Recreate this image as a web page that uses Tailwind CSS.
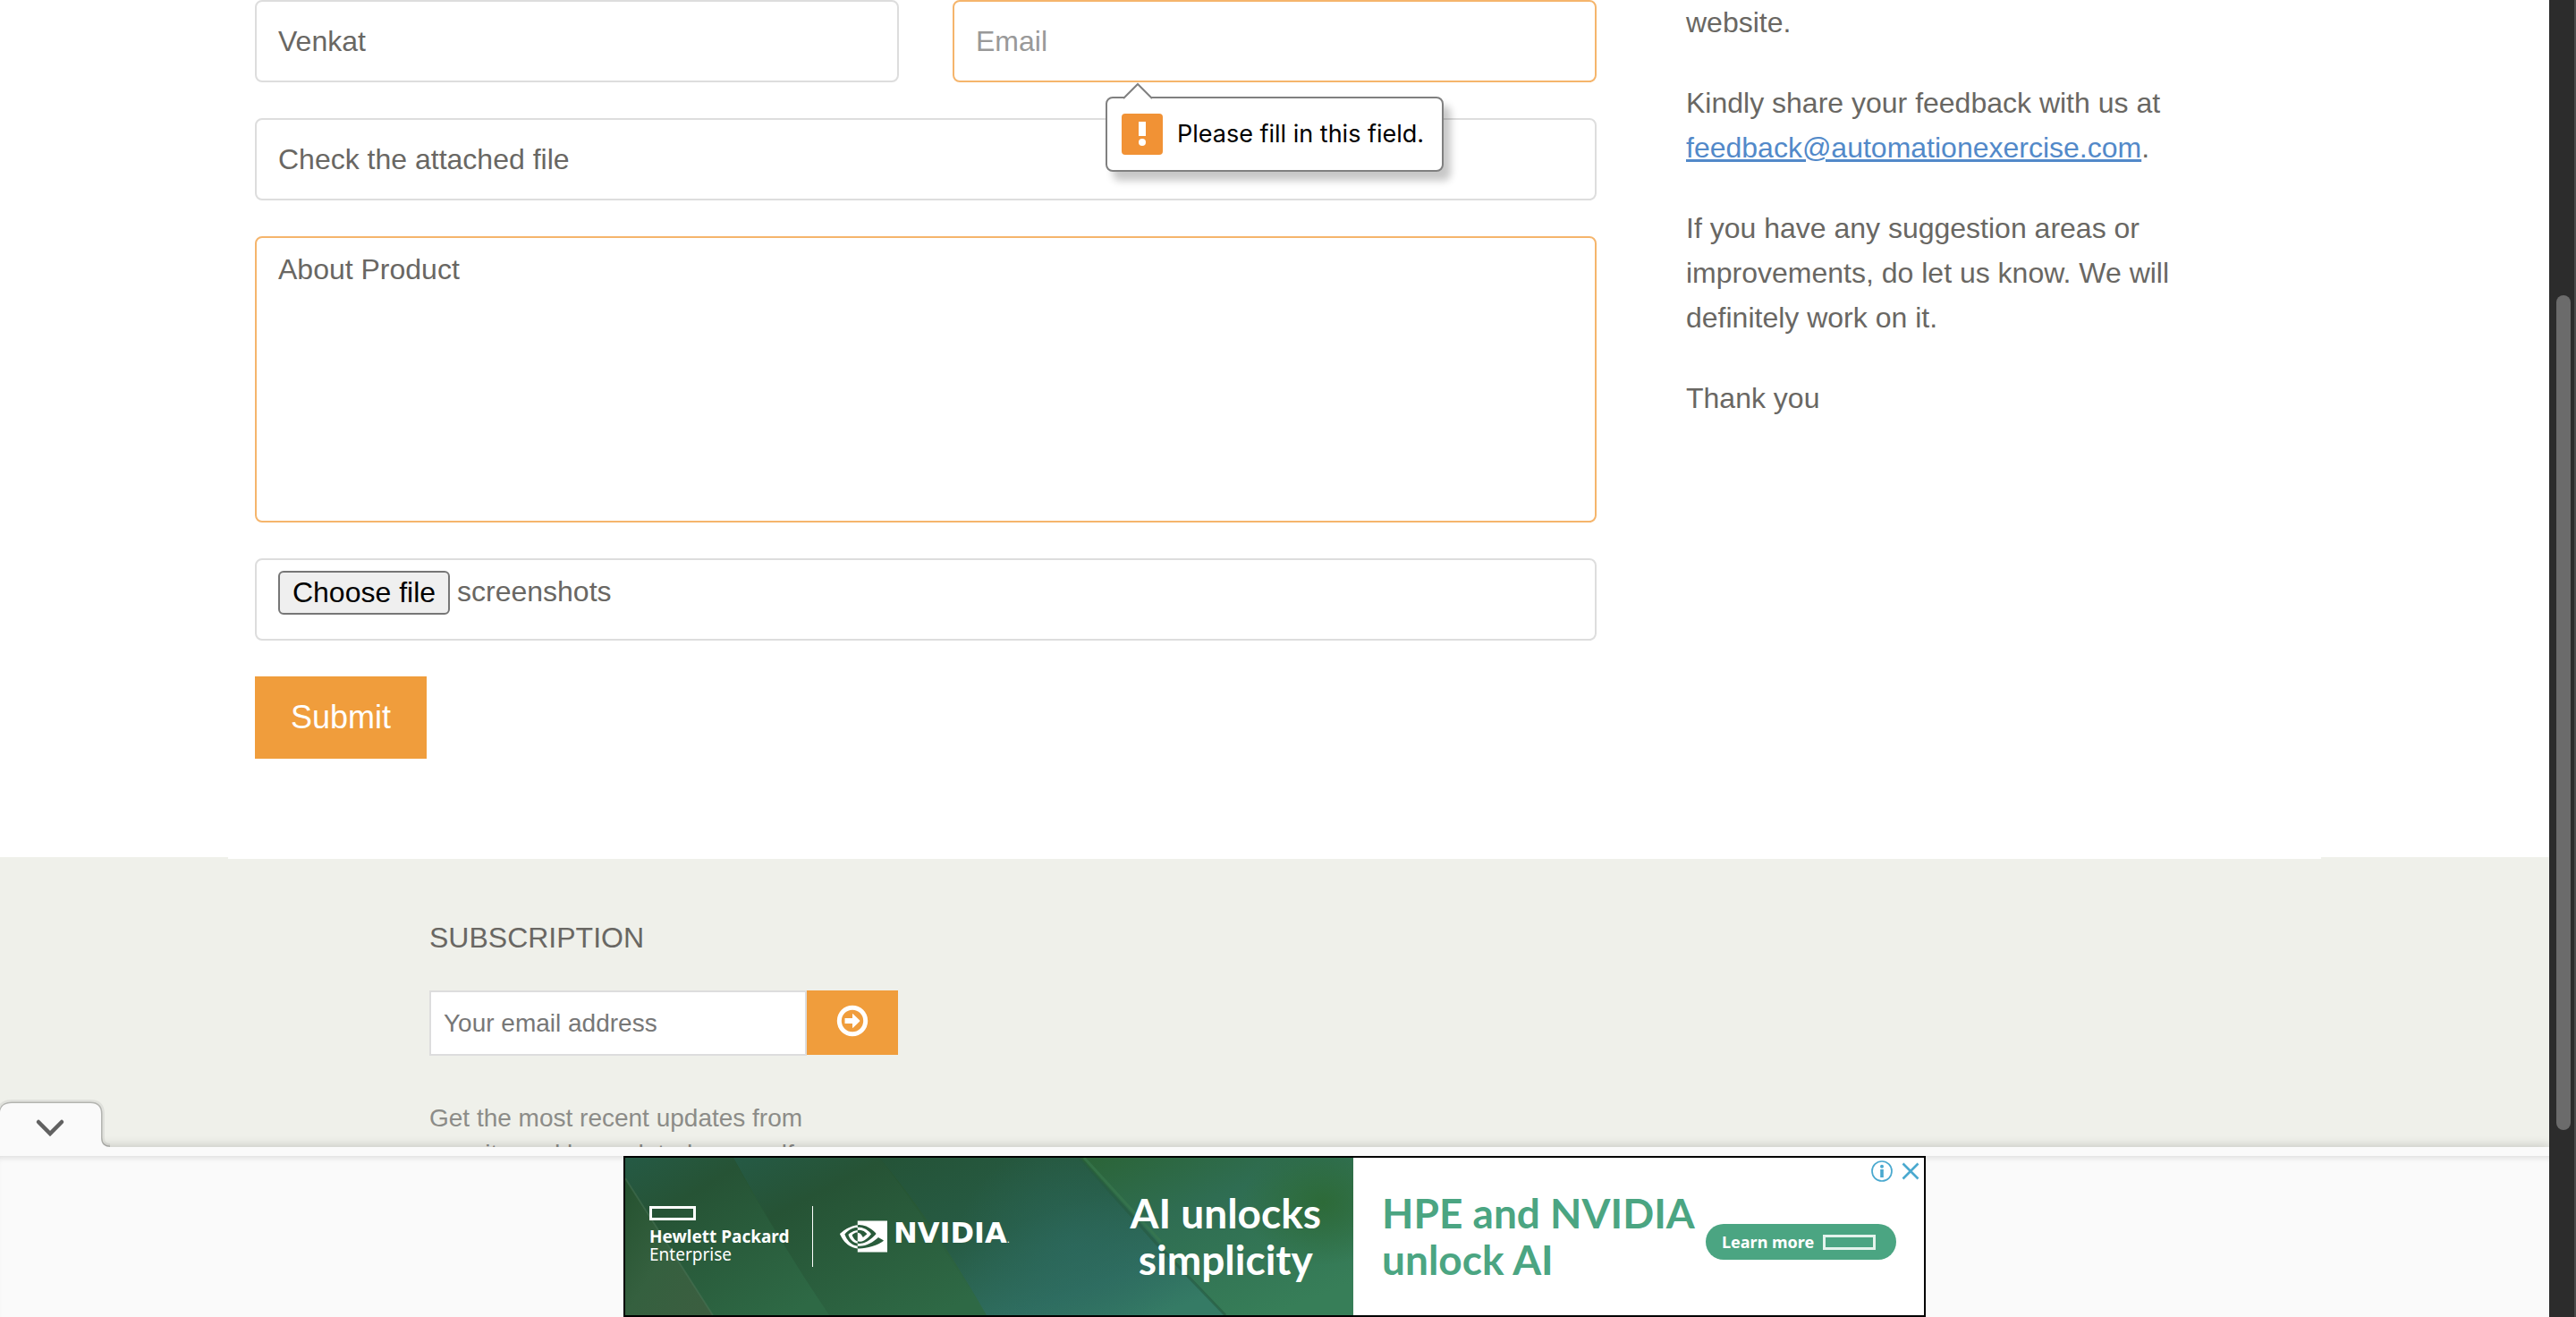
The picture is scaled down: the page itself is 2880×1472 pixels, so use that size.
<!DOCTYPE html>
<html lang="en">
<head>
<meta charset="utf-8">
<title>Contact us</title>
<script src="https://cdn.jsdelivr.net/npm/@tailwindcss/browser@4"></script>
</head>
<body class="flex h-screen overflow-hidden bg-white font-['Liberation_Sans',Arial,sans-serif] text-[32px] text-[#696763]">

<div class="flex h-full min-w-0 flex-1 flex-col">
  <div class="min-h-0 flex-1 overflow-hidden bg-[#eff0ea]">

    <main class="bg-white">
      <div class="mx-auto grid max-w-[2340px] grid-cols-3">
        <form class="col-span-2 flex flex-col gap-10 px-[30px] pb-[110px]">
          <div class="grid grid-cols-2 gap-[60px]">
            <input type="text" aria-label="Name" value="Venkat" class="h-[92px] w-full rounded-lg border-2 border-[#dddddd] px-6">
            <div class="relative">
              <input type="email" aria-label="Email" placeholder="Email" class="h-[92px] w-full rounded-lg border-2 border-[#f5b56c] px-6 placeholder:text-[#999999]">
              <!-- Validation bubble -->
              <div role="alert" class="absolute top-[108px] left-[171px] z-10 flex h-[84px] w-[378px] items-center gap-4 rounded-lg border-2 border-[#808080] bg-white px-4 font-[Inter,sans-serif] text-[27px] text-black shadow-[8px_10px_8px_rgba(0,0,0,0.22)]">
                <svg class="absolute -top-[18px] left-4 h-5 w-9" viewBox="0 0 36 20"><path d="M2 18 L18 2 L34 18 V20 H2 Z" fill="#fff"/><path d="M2 18 L18 2 L34 18" fill="none" stroke="#808080" stroke-width="2"/></svg>
                <svg class="h-[46px] w-[46px] shrink-0" viewBox="0 0 46 46"><rect width="46" height="46" rx="4" fill="#f19235"/><path d="M19 9h8v16h-8z" fill="#fff"/><circle cx="23" cy="32" r="4" fill="#fff"/></svg>
                <span class="whitespace-nowrap">Please fill in this field.</span>
              </div>
            </div>
          </div>
          <input type="text" aria-label="Subject" value="Check the attached file" class="h-[92px] w-full rounded-lg border-2 border-[#dddddd] px-6">
          <textarea aria-label="Message" class="block h-80 w-full resize-none rounded-lg border-2 border-[#f5b56c] px-6 py-3 leading-[46px]">About Product</textarea>
          <label class="relative flex h-[92px] w-full items-start gap-2 rounded-lg border-2 border-[#dddddd] px-6 py-3">
            <input type="file" class="sr-only">
            <span class="h-[49px] w-48 rounded-md border-2 border-[#767676] bg-[#efefef] text-center leading-[44px] text-black">Choose file</span>
            <span class="leading-[46px]">screenshots</span>
          </label>
          <button type="submit" class="h-[92px] w-48 bg-[#f09d3c] text-4xl text-white">Submit</button>
        </form>

        <aside class="flex max-w-[710px] flex-col gap-10 pr-[50px] pl-[70px] leading-[50px]">
          <p>website.</p>
          <p>Kindly share your feedback with us at <a href="mailto:feedback@automationexercise.com" class="text-[#5289c9] underline decoration-[3px] underline-offset-2">feedback@automationexercise.com</a>.</p>
          <p>If you have any suggestion areas or improvements, do let us know. We will definitely work on it.</p>
          <p>Thank you</p>
        </aside>
      </div>
    </main>

    <footer class="bg-[#eff0ea]">
      <div class="mx-auto max-w-[2340px] border-t-2 border-white pt-[65px] pl-[225px]">
        <h2 class="leading-[46px]">SUBSCRIPTION</h2>
        <form class="mt-9 flex">
          <input type="email" aria-label="Your email address" placeholder="Your email address" class="h-[73px] w-[422px] border-2 border-[#dddddd] bg-white px-[14px] text-[28px] placeholder:text-[#777777]">
          <button type="submit" aria-label="Subscribe" class="flex h-[72px] w-[102px] items-center justify-center bg-[#f09d3c]">
            <svg class="mb-1 h-9 w-9" viewBox="0 0 36 36"><circle cx="18" cy="18" r="14.7" fill="none" stroke="#fff" stroke-width="5"/><path d="M9.5 15h8.500v-4.200q0-1.200 1-.4l7 6.900q.8.700 0 1.400l-7 6.900q-1 .8-1-.4V21H9.500z" fill="#fff"/></svg>
          </button>
        </form>
        <p class="mt-[50px] max-w-[524px] text-[28px] leading-10 text-[#8c8c88]">Get the most recent updates from<br>our site and be updated your self...</p>
      </div>
    </footer>
  </div>

  <!-- Anchored ad -->
  <section aria-label="Advertisement" class="relative bg-[#fafafa] pt-[10px] shadow-[0_-2px_10px_rgba(0,0,0,0.16)]">
    <button type="button" aria-label="Hide ad" class="absolute -top-[50px] left-0 h-[60px] w-[124px]">
      <svg class="h-[60px] w-[124px] overflow-visible" viewBox="0 0 124 60">
        <path d="M0 13Q1 1 13 1H101Q113 1 113 13V40Q113 50 123 50" fill="none" stroke="#000" stroke-opacity=".06" stroke-width="8"/>
        <path d="M0 13Q1 1 13 1H101Q113 1 113 13V40Q113 50 123 50" fill="none" stroke="#000" stroke-opacity=".2" stroke-width="3"/>
        <path d="M0 11Q1 1 13 1H101Q113 1 113 13V40Q113 50 124 50V60H0Z" fill="#fafafa"/>
        <path d="M43 22L56 35L69 22" fill="none" stroke="#616161" stroke-width="4.500" stroke-linecap="round"/>
      </svg>
    </button>
    <div class="flex justify-center shadow-[inset_0_6px_6px_-4px_rgba(0,0,0,0.12)]">
      <div class="flex h-[180px] w-[1456px] border-2 border-black bg-white">
        <div class="relative flex w-[814px] items-center overflow-hidden text-white">
          <svg class="absolute inset-0 h-full w-full" viewBox="0 0 814 176" preserveAspectRatio="none">
            <defs>
              <linearGradient id="base" x1="0" y1="0" x2="0" y2="1"><stop offset="0" stop-color="#24502f"/><stop offset="1" stop-color="#2f6b47"/></linearGradient>
              <linearGradient id="left" x1="0" y1="0" x2="1" y2="1"><stop offset="0" stop-color="#24512f"/><stop offset=".5" stop-color="#35603f"/><stop offset="1" stop-color="#3c5e40"/></linearGradient>
              <linearGradient id="leaf" x1="0" y1="0" x2=".8" y2="1"><stop offset="0" stop-color="#255a45"/><stop offset=".3" stop-color="#265335"/><stop offset="1" stop-color="#2e6945"/></linearGradient>
              <linearGradient id="teal" x1="0" y1="0" x2=".8" y2="1"><stop offset="0" stop-color="#245337"/><stop offset=".45" stop-color="#275c45"/><stop offset=".8" stop-color="#2f6e60"/><stop offset="1" stop-color="#357b65"/></linearGradient>
              <linearGradient id="right" x1="0" y1="0" x2=".7" y2="1"><stop offset="0" stop-color="#2b6437"/><stop offset=".4" stop-color="#2f6d52"/><stop offset="1" stop-color="#377e58"/></linearGradient>
              <radialGradient id="pool"><stop offset="0" stop-color="#2c6a62" stop-opacity=".55"/><stop offset="1" stop-color="#2c6a62" stop-opacity="0"/></radialGradient>
              <radialGradient id="moss"><stop offset="0" stop-color="#2d6a38"/><stop offset="1" stop-color="#2d6a38" stop-opacity="0"/></radialGradient>
            </defs>
            <rect width="814" height="176" fill="url(#base)"/>
            <path d="M0 0H121Q145 50 228 176H98L0 23Z" fill="url(#leaf)"/>
            <path d="M0 23L98 176H0Z" fill="url(#left)"/>
            <path d="M121 0H284Q320 44 404 176H228Q170 90 121 0Z" fill="url(#leaf)"/>
            <path d="M284 0H508L671 176H404Q340 65 284 0Z" fill="url(#teal)"/>
            <ellipse cx="500" cy="100" rx="130" ry="120" fill="url(#pool)"/>
            <path d="M508 0H814V176H671Z" fill="url(#right)"/>
            <ellipse cx="780" cy="50" rx="90" ry="70" fill="url(#moss)"/>
            <path d="M508 0L594 96L671 176" fill="none" stroke="#265a40" stroke-opacity=".6" stroke-width="3"/>
            <path d="M513 0L599 94" fill="none" stroke="#3b7a50" stroke-opacity=".6" stroke-width="3"/>
            <path d="M0 23L98 176" fill="none" stroke="#4a7455" stroke-opacity=".5" stroke-width="2"/>
          </svg>
          <div class="relative ml-[27px] flex w-[183px] flex-col border-r border-white pb-1">
            <svg class="h-4 w-[52px]" viewBox="0 0 52 16"><rect x="1.500" y="1.500" width="49" height="13" fill="none" stroke="#fff" stroke-width="3"/></svg>
            <div class="mt-2 font-['Noto_Sans',sans-serif] text-[19px] leading-5 whitespace-nowrap"><b>Hewlett Packard</b><br>Enterprise</div>
          </div>
          <div class="relative ml-[30px] flex items-center gap-[7px]">
            <svg class="h-9 w-[53px]" viewBox="0 4 24 16" fill="#fff"><path d="M8.948 8.798v-1.430a6.700 6.700 0 0 1 .424-.018c3.922-.124 6.493 3.374 6.493 3.374s-2.774 3.851-5.750 3.851c-.398 0-.787-.062-1.158-.185v-4.346c1.528.185 1.837.857 2.747 2.385l2.040-1.714s-1.492-1.952-4-1.952a6.016 6.016 0 0 0-.796.035m0-4.735v2.138l.424-.027c5.450-.185 9.010 4.470 9.010 4.470s-4.080 4.964-8.330 4.964c-.370 0-.733-.035-1.095-.097v1.325c.3.035.610.062.910.062 3.957 0 6.820-2.023 9.593-4.408.459.371 2.340 1.263 2.730 1.652-2.633 2.208-8.772 3.984-12.253 3.984-.335 0-.653-.018-.971-.053v1.864H24V4.063zm0 10.326v1.131c-3.657-.654-4.673-4.460-4.673-4.460s1.758-1.944 4.673-2.262v1.237H8.940c-1.528-.186-2.730 1.245-2.730 1.245s.680 2.412 2.739 3.110M2.456 10.900s2.164-3.197 6.500-3.533V6.201C4.153 6.590 0 10.653 0 10.653s2.350 6.802 8.948 7.420v-1.237c-4.840-.6-6.492-5.936-6.492-5.936z"/></svg>
            <span class="font-['DejaVu_Sans',sans-serif] text-[32px] leading-9 font-bold">NVIDIA<span class="text-[10px] font-normal">.</span></span>
          </div>
          <div class="absolute inset-y-0 right-9 flex items-center text-center font-[Lato,sans-serif] text-[46px] leading-[52px] font-bold">AI unlocks<br>simplicity</div>
        </div>
        <div class="relative flex flex-1 items-center">
          <div class="ml-8 font-[Lato,sans-serif] text-[46px] leading-[52px] font-bold whitespace-nowrap text-[#4ba582]">HPE and NVIDIA<br>unlock AI</div>
          <a href="#" class="absolute top-[74px] right-[31px] flex h-10 w-[213px] items-center gap-[10px] rounded-full bg-[#4ba582] pl-[18px] font-['Noto_Sans',sans-serif] text-[18px] font-bold text-white">Learn more
            <svg class="h-[17px] w-[59px]" viewBox="0 0 59 17"><rect x="1.500" y="1.500" width="56" height="14" fill="none" stroke="#e4f3ec" stroke-width="3"/></svg>
          </a>
          <div class="absolute top-[3px] right-[5px] flex items-center gap-[10px]">
            <button type="button" aria-label="About this ad" class="h-6 w-6"><svg class="h-6 w-6" viewBox="0 0 24 24"><circle cx="12" cy="12" r="11" fill="none" stroke="#4aa9cf" stroke-width="1.700"/><path d="M10.200 10h3.600v9h-3.600z" fill="#4aa9cf"/><circle cx="12" cy="6.700" r="2" fill="#4aa9cf"/></svg></button>
            <button type="button" aria-label="Close ad" class="h-5 w-5"><svg class="h-5 w-5" viewBox="0 0 20 20"><path d="M1.500 1.500l17 17M18.500 1.500l-17 17" fill="none" stroke="#4aa9cf" stroke-width="2.600"/></svg></button>
          </div>
        </div>
      </div>
    </div>
  </section>
</div>

<!-- Scrollbar -->
<div aria-hidden="true" class="relative h-full w-[30px] shrink-0 border-r-2 border-[#4a4a4a] bg-[#2c2c2c]">
  <div class="absolute top-[330px] left-2 h-[933px] w-4 rounded-full bg-[#6b6b6b]"></div>
</div>

</body>
</html>
